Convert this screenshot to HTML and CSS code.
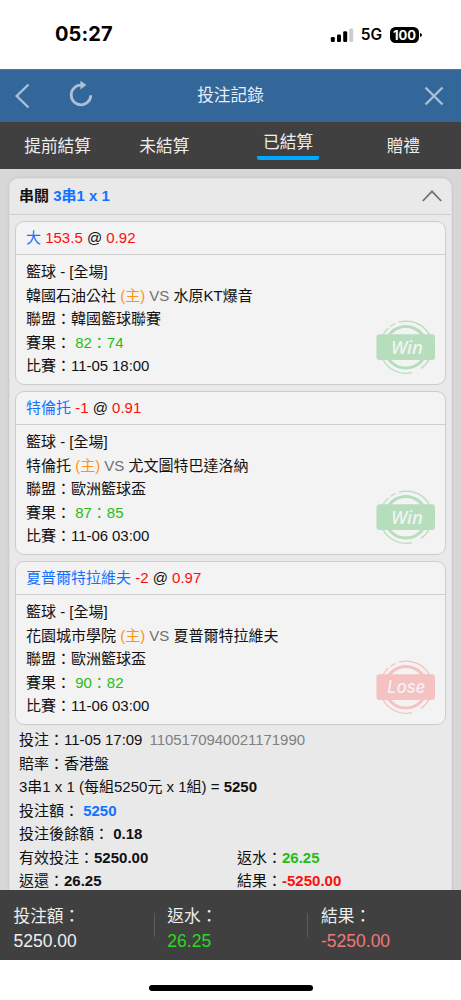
FILE: index.html
```html
<!DOCTYPE html>
<html lang="zh-Hant">
<head>
<meta charset="utf-8">
<title>投注記錄</title>
<link rel="stylesheet" href="styles.css">
</head>
<body>
<div class="screen">
  <div class="status">
    <span class="clock">05:27</span>
    <div class="signals">
      <svg class="bars" width="24" height="16" viewBox="0 0 24 16"><rect x="0.8" y="10" width="4" height="5" rx="1.2"/><rect x="7" y="7.6" width="4" height="7.4" rx="1.2"/><rect x="13.2" y="4.2" width="4" height="10.8" rx="1.2"/><rect x="19.2" y="1.5" width="4" height="13.5" rx="1.2" fill="#ccc"/></svg>
      <span class="net">5G</span>
      <span class="battery">100</span>
      <svg width="2" height="6" viewBox="0 0 2 6"><path d="M0 1Q2 1.5 2 3T0 5Z" fill="#000"/></svg>
    </div>
  </div>
  <header class="nav">
    <svg width="16" height="26" viewBox="0 0 16 26" class="back"><path d="M13.5 1.5L1.7 13L13.5 24.5"/></svg>
    <svg width="26" height="28" viewBox="0 0 26 28" class="reload"><path d="M14 5.2H13A9.8 9.8 0 1 0 22.8 15.2"/><path class="tip" d="M12.4 0.8L18.4 5L12.4 9.4Z"/></svg>
    <h1>投注記錄</h1>
    <svg width="20" height="20" viewBox="0 0 20 20" class="close"><path d="M1.5 1.5L18.5 18.5M18.5 1.5L1.5 18.5"/></svg>
  </header>
  <nav class="tabs">
    <span class="tab">提前結算</span>
    <span class="tab tab-second">未結算</span>
    <span class="tab active"><b>已結算</b></span>
    <span class="tab">贈禮</span>
  </nav>
  <main class="content">
    <section class="panel">
      <div class="panel-head">
        <span>串關 <span class="blue">3串1 x 1</span></span>
        <svg width="20" height="12" viewBox="0 0 20 12"><path d="M0.8 11L10 1.4L19.2 11"/></svg>
      </div>
      <div class="bets">
        <article class="bet">
          <div class="bet-head"><span class="blue">大</span> <span class="red">153.5</span> @ <span class="red">0.92</span></div>
          <div class="bet-body">
            <div>籃球 - [全場]</div>
            <div>韓國石油公社 <span class="orange">(主)</span> <span class="gray">VS</span> 水原KT爆音</div>
            <div>聯盟：韓國籃球聯賽</div>
            <div>賽果： <span class="green">82：74</span></div>
            <div>比賽：<span class="date">11-05 18:00</span></div>
          </div>
          <svg class="stamp win" width="60" height="54" viewBox="0 0 60 54"><circle cx="29.8" cy="27.3" r="20.8" class="ring"/><path class="arc" d="M23 2.2A26 26 0 0 1 53.5 15M14.5 6.4A26 26 0 0 1 19.5 3.5M6.5 15.5A26 26 0 0 1 12.5 8M6.5 38.5A26 26 0 0 0 36 52.6M53.5 38.5A26 26 0 0 1 45 48.4"/><rect x="0.5" y="14.3" width="58.5" height="25.8" rx="3"/><text x="31" y="33.7" textLength="32" lengthAdjust="spacingAndGlyphs">Win</text></svg>
        </article>
        <article class="bet">
          <div class="bet-head"><span class="blue">特倫托</span> <span class="red">-1</span> @ <span class="red">0.91</span></div>
          <div class="bet-body">
            <div>籃球 - [全場]</div>
            <div>特倫托 <span class="orange">(主)</span> <span class="gray">VS</span> 尤文圖特巴達洛納</div>
            <div>聯盟：歐洲籃球盃</div>
            <div>賽果： <span class="green">87：85</span></div>
            <div>比賽：<span class="date">11-06 03:00</span></div>
          </div>
          <svg class="stamp win" width="60" height="54" viewBox="0 0 60 54"><circle cx="29.8" cy="27.3" r="20.8" class="ring"/><path class="arc" d="M23 2.2A26 26 0 0 1 53.5 15M14.5 6.4A26 26 0 0 1 19.5 3.5M6.5 15.5A26 26 0 0 1 12.5 8M6.5 38.5A26 26 0 0 0 36 52.6M53.5 38.5A26 26 0 0 1 45 48.4"/><rect x="0.5" y="14.3" width="58.5" height="25.8" rx="3"/><text x="31" y="33.7" textLength="32" lengthAdjust="spacingAndGlyphs">Win</text></svg>
        </article>
        <article class="bet">
          <div class="bet-head"><span class="blue">夏普爾特拉維夫</span> <span class="red">-2</span> @ <span class="red">0.97</span></div>
          <div class="bet-body">
            <div>籃球 - [全場]</div>
            <div>花園城市學院 <span class="orange">(主)</span> <span class="gray">VS</span> 夏普爾特拉維夫</div>
            <div>聯盟：歐洲籃球盃</div>
            <div>賽果： <span class="green">90：82</span></div>
            <div>比賽：<span class="date">11-06 03:00</span></div>
          </div>
          <svg class="stamp lose" width="60" height="54" viewBox="0 0 60 54"><circle cx="29.8" cy="27.3" r="20.8" class="ring"/><path class="arc" d="M23 2.2A26 26 0 0 1 53.5 15M14.5 6.4A26 26 0 0 1 19.5 3.5M6.5 15.5A26 26 0 0 1 12.5 8M6.5 38.5A26 26 0 0 0 36 52.6M53.5 38.5A26 26 0 0 1 45 48.4"/><rect x="0.5" y="14.3" width="58.5" height="25.8" rx="3"/><text x="30.3" y="33.2" textLength="38" lengthAdjust="spacingAndGlyphs">Lose</text></svg>
        </article>
      </div>
      <div class="summary">
        <div>投注：<span class="date">11-05 17:09</span> <span class="serial">1105170940021171990</span></div>
        <div>賠率：香港盤</div>
        <div>3串1 x 1 (每組5250元 x 1組) = <b>5250</b></div>
        <div>投注額： <b class="blue">5250</b></div>
        <div>投注後餘額： <b>0.18</b></div>
        <div class="pair"><span>有效投注：<b>5250.00</b></span><span>返水：<b class="green">26.25</b></span></div>
        <div class="pair"><span>返還：<b>26.25</b></span><span>結果：<b class="red">-5250.00</b></span></div>
      </div>
    </section>
  </main>
  <footer class="totals">
    <div class="total"><span>投注額：</span><span class="num">5250.00</span></div>
    <div class="total"><span>返水：</span><span class="num gain">26.25</span></div>
    <div class="total"><span>結果：</span><span class="num loss">-5250.00</span></div>
  </footer>
  <div class="home"><div class="home-bar"></div></div>
</div>
</body>
</html>
```
FILE: styles.css
```css
* { box-sizing: border-box; }
body {
  margin: 0;
  background: #fff;
  color: #111;
  font: 15px/23.5px "Liberation Sans", "Noto Sans CJK TC", sans-serif;
}
.screen { width: 461px; height: 1000px; display: flex; flex-direction: column; overflow: hidden; }
.status {
  height: 69px;
  flex: none;
  display: flex;
  justify-content: space-between;
  align-items: center;
  padding: 1px 39px 0 55px;
  font-family: Inter, sans-serif;
  color: #000;
}
.clock { font-size: 20px; font-weight: 700; letter-spacing: 0.1px; }
.signals { display: flex; align-items: center; }
.net { font-size: 15.5px; font-weight: 600; margin-left: 7px; }
.battery {
  margin-left: 8px;
  width: 29px;
  height: 16px;
  border-radius: 5.5px;
  background: #000;
  color: #fff;
  font-size: 13px;
  line-height: 16px;
  font-weight: 700;
  text-align: center;
}
.signals > svg:last-child { margin-left: 1px; }
.nav {
  height: 53px;
  flex: none;
  background: #336699;
  border-top: 1px solid #4a7db0;
  display: grid;
  grid-template-columns: 54px 74px 1fr 128px;
  align-items: center;
  color: #e6edf5;
}
.nav svg { fill: none; stroke: #a9c0d8; stroke-width: 2.4; }
.nav h1 { margin: 0; font-size: 16.7px; font-weight: 400; text-align: center; }
.back { margin-left: 15px; }
.reload { margin: -4px 0 0 14px; }
.nav .reload path { stroke-width: 2.8; }
.nav .reload .tip { fill: #a9c0d8; stroke: none; }
.close { justify-self: end; margin-right: 17px; }
.tabs {
  height: 47px;
  flex: none;
  display: grid;
  grid-template-columns: repeat(4, 1fr);
  background: #404040;
  color: #eee;
  font-size: 16.7px;
  text-align: center;
}
.tab { padding-top: 13px; }
.tab-second { padding-right: 17px; }
.active { padding-top: 6px; }
.active b {
  display: block;
  width: 62px;
  height: 32px;
  margin: 0 auto;
  padding-top: 3px;
  font-weight: 400;
  background: linear-gradient(#00a8ff, #00a8ff) center bottom / 100% 4px no-repeat;
  border-radius: 0 0 2px 2px;
}
.content { flex: 1; min-height: 0; overflow: hidden; background: #d7d7d7; padding: 9px 9px 0; }
.panel {
  background: #e9e9e9;
  border: 1px solid #e0e0e0;
  border-radius: 9px 9px 0 0;
  box-shadow: 0 0 3px rgba(0, 0, 0, .12);
  height: 760px;
}
.panel-head {
  height: 36px;
  border-bottom: 1px solid #cfcfcf;
  padding: 0 9px 1px;
  display: flex;
  justify-content: space-between;
  align-items: center;
  font-weight: 700;
}
.panel-head svg { fill: none; stroke: #737373; stroke-width: 1.8; }
.bets { padding: 6px 5px 0; display: flex; flex-direction: column; gap: 6px; }
.bet { position: relative; height: 164px; background: #f3f3f3; border: 1px solid #ccc; border-radius: 9px; }
.bet-head { height: 33px; line-height: 31px; padding-left: 10px; border-bottom: 1px solid #d0d0d0; }
.bet-body { padding: 5px 0 0 10px; }
.date { letter-spacing: -0.06px; }
.blue { color: #1272ff; }
.red { color: #ff0d0d; }
.green { color: #25bd16; }
.orange { color: #ff930f; }
.gray { color: #707070; }
.stamp { position: absolute; right: 9px; bottom: 10px; color: #b7debc; fill: currentColor; }
.lose { color: #f5c1c1; }
.stamp .ring, .stamp .arc { fill: none; stroke: currentColor; }
.stamp .ring { stroke-width: 3; }
.stamp .arc { stroke-width: 1.3; }
.stamp text { fill: #f3f3f3; font: italic 500 18px "Noto Sans", sans-serif; text-anchor: middle; }
.stamp.lose text { font: italic 500 17px Inter, sans-serif; }
.summary { padding: 3px 9px 0; }
.serial { color: #808080; margin-left: 3px; letter-spacing: -0.04px; }
.pair { display: grid; grid-template-columns: 218px 1fr; }
.totals {
  height: 70px;
  flex: none;
  background: #404040;
  color: #eee;
  display: grid;
  grid-template-columns: repeat(3, 1fr);
  align-items: center;
}
.total { height: 24px; padding: 7px 0 0 13.5px; display: flex; flex-direction: column; justify-content: center; font-size: 16.7px; line-height: 24px; }
.total + .total { border-left: 1px solid #5c5c5c; padding-left: 12.7px; }
.num { font-size: 17.5px; }
.gain { color: #29d922; }
.loss { color: #f07878; }
.home { height: 40px; flex: none; display: flex; justify-content: center; padding-top: 24.5px; }
.home-bar { width: 164px; height: 6px; border-radius: 3px; background: #000; }
```
